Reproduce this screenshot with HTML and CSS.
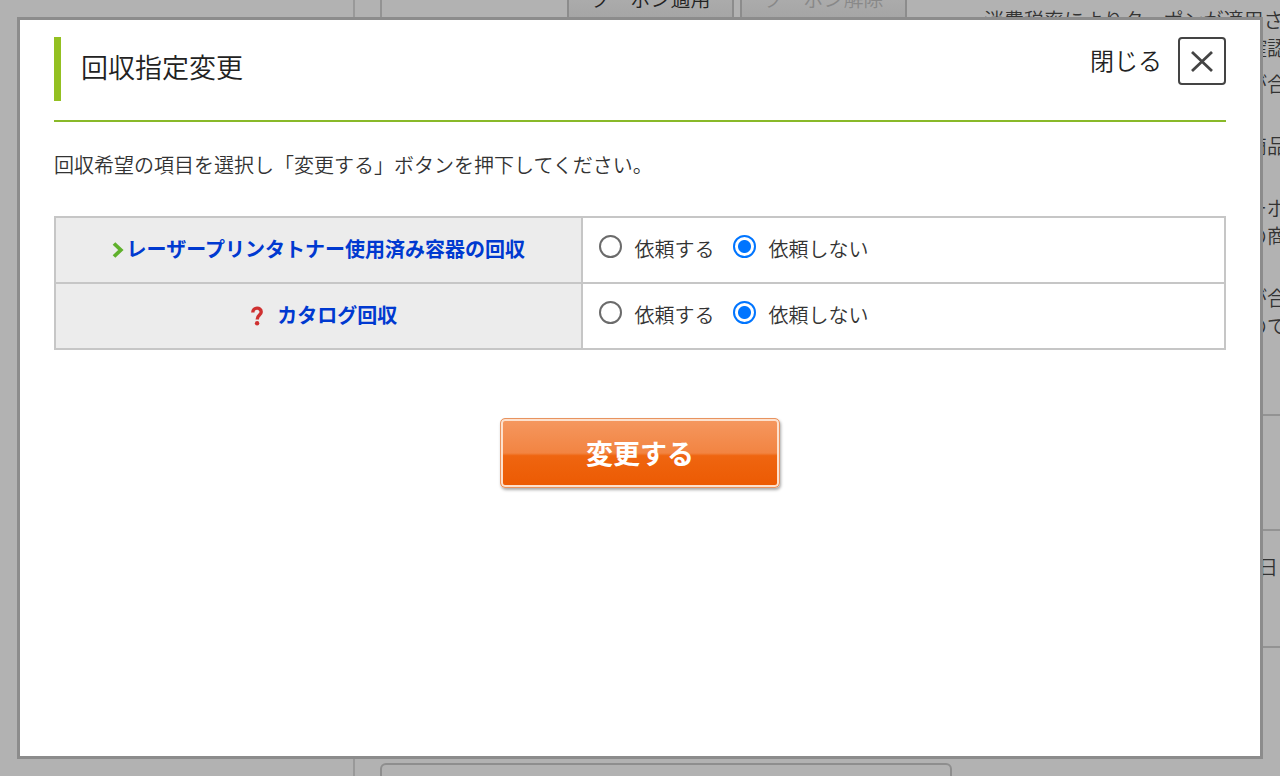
FILE: index.html
```html
<!DOCTYPE html>
<html lang="ja">
<head>
<meta charset="utf-8">
<title>回収指定変更</title>
<link rel="stylesheet" href="styles.css">
</head>
<body>
<div class="page">
  <aside class="sidebar"></aside>
  <main class="main">
    <section class="order">
      <div class="coupon">
        <button type="button" class="coupon-button">クーポン適用</button>
        <button type="button" class="coupon-button" disabled>クーポン解除</button>
      </div>
      <div class="notes">
        <p class="note note-lead">消費税率によりクーポンが適用さ</p>
        <p class="note">確認</p>
        <p class="note note-item">が合</p>
        <p class="note note-group">商品</p>
        <p class="note note-group">ーポ</p>
        <p class="note">の商</p>
        <p class="note note-group">が合</p>
        <p class="note">ので</p>
      </div>
      <div class="order-row"></div>
      <div class="order-row order-date">日</div>
      <div class="order-row"></div>
    </section>
    <section class="panel"></section>
  </main>
</div>

<div class="modal" role="dialog" aria-modal="true" aria-labelledby="modal-title">
  <header class="modal-header">
    <h1 class="modal-title" id="modal-title">回収指定変更</h1>
    <button type="button" class="close">
      <span class="close-label">閉じる</span>
      <span class="close-box">
        <svg width="24" height="24" viewBox="0 0 24 24" aria-hidden="true"><path d="M2 3 L22 22 M22 3 L2 22" fill="none" stroke="#444" stroke-width="2.8"/></svg>
      </span>
    </button>
  </header>
  <p class="lead">回収希望の項目を選択し「変更する」ボタンを押下してください。</p>
  <form class="form">
    <table class="options">
      <tr>
        <th scope="row">
          <a href="#toner" class="option-link"><svg class="arrow" width="12" height="16" viewBox="0 0 12 16" aria-hidden="true"><path d="M2 1.5 L8.8 8 L2 14.5" fill="none" stroke="#5fb12c" stroke-width="3.8"/></svg>レーザープリンタトナー使用済み容器の回収</a>
        </th>
        <td>
          <div class="choices">
            <label class="choice"><input type="radio" name="toner" value="yes">依頼する</label>
            <label class="choice"><input type="radio" name="toner" value="no" checked>依頼しない</label>
          </div>
        </td>
      </tr>
      <tr>
        <th scope="row">
          <a href="#catalog" class="option-link"><svg class="question" width="12" height="20" viewBox="0 0 12 20" aria-hidden="true"><path d="M1.8 6.5 C1.8 .8 10.2 .8 10.2 6 C10.2 9.2 6.2 9 6.2 13.4" fill="none" stroke="#cf3030" stroke-width="3.4"/><circle cx="6.1" cy="17.3" r="2.2" fill="#cf3030"/></svg>カタログ回収</a>
        </th>
        <td>
          <div class="choices">
            <label class="choice"><input type="radio" name="catalog" value="yes">依頼する</label>
            <label class="choice"><input type="radio" name="catalog" value="no" checked>依頼しない</label>
          </div>
        </td>
      </tr>
    </table>
    <button type="submit" class="submit">変更する</button>
  </form>
</div>
</body>
</html>
```
FILE: styles.css
```css
* { box-sizing: border-box; }

body {
  margin: 0;
  height: 100vh;
  overflow: hidden;
  background: #b2b2b2;
  color: #333;
  font-family: "Noto Sans CJK JP", sans-serif;
  font-size: 20px;
  font-weight: 350;
  line-height: 28px;
}

h1, p { margin: 0; }

button, input { font: inherit; }

/* Dimmed page behind the dialog */
.page {
  display: grid;
  grid-template-columns: 355px 1fr;
  height: 100vh;
  overflow: hidden;
}

.sidebar { border-right: 2px solid #999; }

.main { padding-left: 25px; min-width: 0; }

.order {
  display: grid;
  grid-template-columns: 1fr 300px;
  grid-template-rows: 454px 115px 117px 91px;
  margin-top: -40px;
  border-left: 2px solid #939393;
}

.coupon {
  display: flex;
  align-items: flex-start;
  gap: 6px;
  padding: 12px 0 0 185px;
}

.coupon-button {
  width: 167px;
  height: 54px;
  padding: 0;
  border: 2px solid #8c8c8c;
  background: linear-gradient(#b4b4b4, #a3a3a3);
  color: #222;
  white-space: nowrap;
}

.coupon-button:disabled { color: #888; }

.notes { padding-top: 46px; }

.note {
  padding-left: 267px;
  overflow: hidden;
  white-space: nowrap;
}

.note-lead { padding-left: 4px; }
.note-item { margin-top: 8px; }
.note-group { margin-top: 34px; }

.order-row {
  grid-column: 1 / -1;
  border-top: 2px solid #939393;
}

.order-date { padding: 22px 2px 0 0; text-align: right; }

.panel {
  width: 572px;
  height: 60px;
  margin-top: 26px;
  border: 2px solid #8e8e8e;
  border-radius: 6px;
}

/* Dialog */
.modal {
  position: fixed;
  inset: 17px;
  padding: 17px 34px;
  border: 3px solid #8c8c8c;
  background: #fff;
  overflow: auto;
}

.modal-header {
  display: flex;
  justify-content: space-between;
  align-items: flex-start;
  padding-bottom: 19px;
  border-bottom: 2px solid #89b929;
}

.modal-title {
  padding: 9px 0 14px 20px;
  border-left: 7px solid #93c021;
  color: #222;
  font-size: 27px;
  font-weight: 350;
  line-height: 41px;
}

.close {
  display: flex;
  align-items: center;
  gap: 16px;
  padding: 0;
  border: 0;
  background: none;
  color: #222;
  font-size: 24px;
  cursor: pointer;
}

.close-label { padding-bottom: 3px; }

.close-box {
  display: grid;
  place-items: center;
  width: 48px;
  height: 48px;
  border: 2px solid #444;
  border-radius: 4px;
}

.lead { padding: 29px 0 37px; }

.form {
  display: flex;
  flex-direction: column;
  align-items: center;
}

.options {
  width: 100%;
  border-collapse: collapse;
  table-layout: fixed;
}

.options th,
.options td {
  height: 66px;
  padding: 0 0 3px;
  border: 2px solid #c6c6c6;
}

.options th { width: 45%; background: #ececec; }

.option-link {
  display: flex;
  justify-content: center;
  align-items: center;
  color: #0039d0;
  font-weight: 700;
  text-decoration: none;
}

.arrow { margin: 2px 3px 0 0; }
.question { margin: 2px 14px 0 12px; }

.choices { display: flex; gap: 18px; padding-left: 16px; }

.choice {
  display: flex;
  align-items: center;
  gap: 13px;
}

.choice input {
  appearance: none;
  width: 23px;
  height: 23px;
  margin: 0 0 5px;
  border: 2px solid #6b6b6b;
  border-radius: 50%;
  background: #fff;
}

.choice input:checked {
  border-color: #0075ff;
  background: radial-gradient(circle, #0075ff 6px, #fff 7px);
}

.submit {
  width: 280px;
  height: 70px;
  margin-top: 68px;
  padding: 0;
  border: 1px solid #e8935f;
  border-radius: 5px;
  background: linear-gradient(#f59860, #f28442 50%, #ef6510 54%, #ec5a02);
  box-shadow: inset 0 0 0 2px #fde1ce, 1px 2px 3px #aaa;
  color: #fff;
  font-size: 27px;
  font-weight: 700;
  cursor: pointer;
}
```
